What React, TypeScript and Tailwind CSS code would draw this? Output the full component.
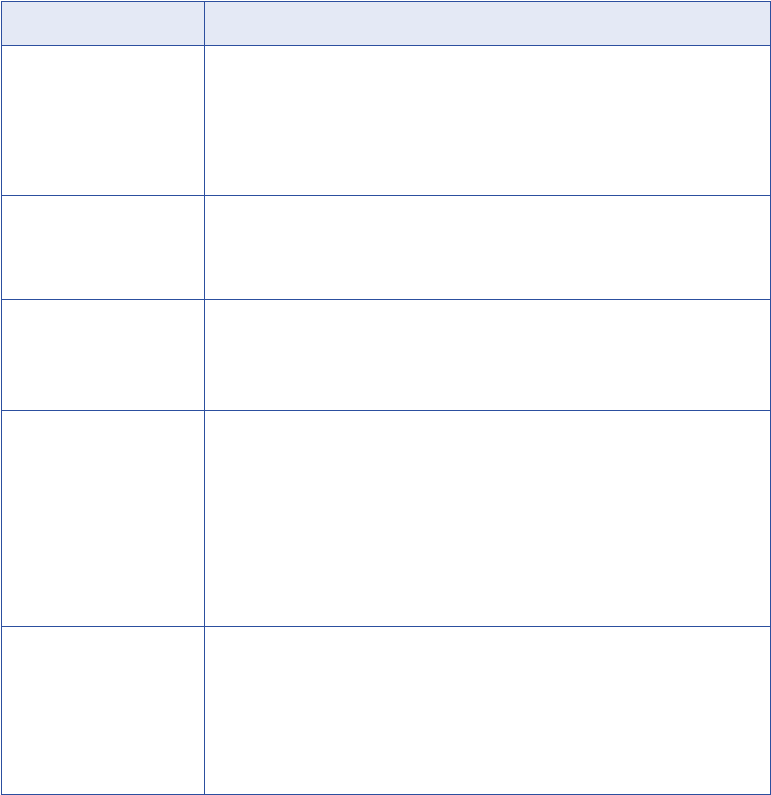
export default function App() {
  const rows = [149, 103, 110, 215, 167];
  return (
    <div className="bg-white min-h-[795px] pt-[1px] pl-[1px]">
      <div className="w-[770px] border border-[#2c4f9f] font-['Liberation_Sans',sans-serif] text-sm">
        <div className="flex h-[44px] bg-[#e4e9f5] border-b border-[#2c4f9f]">
          <div className="w-[203px] border-r border-[#2c4f9f]"></div>
          <div className="flex-1"></div>
        </div>
        {rows.map((h, i) => (
          <div
            key={i}
            className={
              i < rows.length - 1
                ? "flex border-b border-[#2c4f9f]"
                : "flex"
            }
            style={{ height: i < rows.length - 1 ? h + 1 : h }}
          >
            <div className="w-[203px] border-r border-[#2c4f9f]"></div>
            <div className="flex-1"></div>
          </div>
        ))}
      </div>
    </div>
  );
}
